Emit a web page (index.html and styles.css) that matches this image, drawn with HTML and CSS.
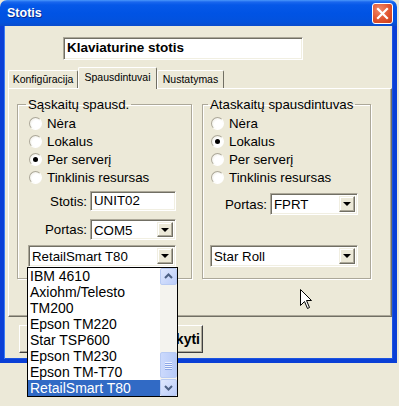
FILE: index.html
```html
<!DOCTYPE html>
<html lang="lt">
<head>
  <meta charset="UTF-8">
  <title>Stotis</title>
  <link rel="stylesheet" href="styles.css">
</head>
<body>

<div class="window">
  <div class="titlebar">
    <span class="title">Stotis</span>
    <span class="close">
      <svg width="21" height="21" viewBox="0 0 21 21">
        <path d="M6 6 L15 15 M15 6 L6 15" stroke="#fff" stroke-width="2.2" stroke-linecap="square"/>
      </svg>
    </span>
  </div>

  <div class="frame">
    <div class="name-field">Klaviaturine stotis</div>

    <div class="tabs">
      <div class="tab tab-konf">Konfigūracija</div>
      <div class="tab tab-spausd active">Spausdintuvai</div>
      <div class="tab tab-nust">Nustatymas</div>
    </div>

    <div class="panel">
      <!-- Sąskaitų spausdintuvas -->
      <fieldset class="group group-left">
        <legend>Sąskaitų spausd.</legend>
        <div class="radios">
          <div class="radio-row"><span class="radio"></span>Nėra</div>
          <div class="radio-row"><span class="radio"></span>Lokalus</div>
          <div class="radio-row"><span class="radio checked"></span>Per serverį</div>
          <div class="radio-row"><span class="radio"></span>Tinklinis resursas</div>
        </div>
        <div class="field-row row-stotis">
          <span class="field-label">Stotis:</span>
          <div class="edit">UNIT02</div>
        </div>
        <div class="field-row row-portas">
          <span class="field-label">Portas:</span>
          <div class="combo combo-port">
            <span class="combo-text">COM5</span>
            <span class="combo-btn"><span class="arrow"></span></span>
          </div>
        </div>
        <div class="combo combo-model">
          <span class="combo-text">RetailSmart T80</span>
          <span class="combo-btn"><span class="arrow"></span></span>
        </div>
      </fieldset>

      <!-- Ataskaitų spausdintuvas -->
      <fieldset class="group group-right">
        <legend>Ataskaitų spausdintuvas</legend>
        <div class="radios">
          <div class="radio-row"><span class="radio"></span>Nėra</div>
          <div class="radio-row"><span class="radio checked"></span>Lokalus</div>
          <div class="radio-row"><span class="radio"></span>Per serverį</div>
          <div class="radio-row"><span class="radio"></span>Tinklinis resursas</div>
        </div>
        <div class="field-row row-portas-r">
          <span class="field-label">Portas:</span>
          <div class="combo combo-port-r">
            <span class="combo-text">FPRT</span>
            <span class="combo-btn"><span class="arrow"></span></span>
          </div>
        </div>
        <div class="combo combo-model-r">
          <span class="combo-text">Star Roll</span>
          <span class="combo-btn"><span class="arrow"></span></span>
        </div>
      </fieldset>
    </div>

    <!-- el primer botón queda tapado por la lista -->
    <div class="buttons">
      <div class="btn btn-ok"></div>
      <div class="btn btn-cancel">Atsisakyti</div>
    </div>
  </div>
</div>

<!-- Atidarytas sąrašas -->
<div class="droplist">
  <div class="items">
    <div class="item">IBM 4610</div>
    <div class="item">Axiohm/Telesto</div>
    <div class="item">TM200</div>
    <div class="item">Epson TM220</div>
    <div class="item">Star TSP600</div>
    <div class="item">Epson TM230</div>
    <div class="item">Epson TM-T70</div>
    <div class="item selected">RetailSmart T80</div>
  </div>
  <div class="scrollbar">
    <div class="sb-btn">
      <svg width="15" height="15" viewBox="0 0 15 15"><path d="M4 9 L7.5 5.5 L11 9" fill="none" stroke="#4d6185" stroke-width="2"/></svg>
    </div>
    <div class="sb-track">
      <div class="sb-thumb"><span></span><span></span><span></span><span></span></div>
    </div>
    <div class="sb-btn">
      <svg width="15" height="15" viewBox="0 0 15 15"><path d="M4 6 L7.5 9.5 L11 6" fill="none" stroke="#4d6185" stroke-width="2"/></svg>
    </div>
  </div>
</div>

<svg class="cursor" width="13" height="21" viewBox="0 0 13 21">
  <path d="M0.5 0.5 L0.5 16.5 L4.5 12.5 L7.5 19.5 L9.5 18.5 L6.5 11.5 L11.5 11.5 Z" fill="#fff" stroke="#000" stroke-width="1"/>
</svg>

</body>
</html>
```

FILE: styles.css
```css
body {
  margin: 0;
  width: 399px;
  height: 406px;
  overflow: hidden;
  position: relative;
  background: #ece9d8;
  font-family: "Liberation Sans", Arial, sans-serif;
  font-size: 13.3px;
  color: #000;
}
.window {
  width: 397px;
  height: 363px;
}
.titlebar {
  height: 26px;
  display: flex;
  justify-content: space-between;
  align-items: flex-start;
  padding: 0 4px 0 7px;
  border-radius: 7px 7px 0 0;
  background: linear-gradient(#4a98fb 0, #1a67ee 2px, #0558e8 5px, #0053e4 14px, #0352dd 22px, #0a4ccd 26px);
}
.title {
  color: #fff;
  font-weight: bold;
  font-size: 12.5px;
  line-height: 14px;
  margin-top: 6px;
  text-shadow: 1px 1px 0 #0b2a8a;
}
.close {
  width: 21px;
  height: 21px;
  margin-top: 3px;
  box-sizing: border-box;
  border: 1px solid #fff;
  border-radius: 3px;
  background: radial-gradient(circle at 35% 30%, #f0896a, #e0542f 55%, #c83b17);
}
.close svg {
  display: block;
  margin: -1px;
}
.frame {
  height: 337px;
  box-sizing: border-box;
  border: 4px solid #0a3fd6;
  border-top: none;
  box-shadow: inset 1px 0 0 #3a7cf5, inset -1px -1px 0 #1c54e0;
  background: #ece9d8;
  padding-top: 11px;
}
.name-field {
  width: 240px;
  height: 23px;
  margin-left: 59px;
  box-sizing: border-box;
  background: #fff;
  border: 1px solid;
  border-color: #aca899 #fff #fff #aca899;
  box-shadow: inset 1px 1px 0 #716f64, inset -1px -1px 0 #f1efe2;
  font-weight: bold;
  font-size: 13.5px;
  line-height: 20px;
  padding-left: 3px;
}
/* Pestañas */
.tabs {
  display: flex;
  align-items: flex-end;
  height: 20px;
  margin: 8px 0 0 4px;
  position: relative;
  z-index: 1;
}
.tab {
  height: 18px;
  box-sizing: border-box;
  border: 1px solid;
  border-color: #fff #716f64 transparent #fff;
  border-bottom: none;
  border-radius: 2px 2px 0 0;
  background: #ece9d8;
  font-size: 10.5px;
  line-height: 16px;
  text-align: center;
}
.tab-konf { width: 70px; }
.tab-spausd { width: 79px; }
.tab-nust { width: 67px; }
.tab.active {
  height: 22px;
  margin-bottom: -1px;
  line-height: 18px;
}
.panel {
  width: 384px;
  height: 229px;
  margin-left: 4px;
  box-sizing: border-box;
  border: 1px solid;
  border-color: #fff #716f64 #716f64 #fff;
  box-shadow: inset -1px -1px 0 #aca899;
  display: flex;
  gap: 10px;
  padding: 8px 0 0 8px;
}
.group {
  margin: 0;
  padding: 0;
  height: 182px;
  box-sizing: border-box;
  border: 1px solid #aca899;
  box-shadow: 1px 1px 0 #fff, inset 1px 1px 0 #fff;
}
.group-left { width: 175px; }
.group-right { width: 169px; }
.group legend {
  padding: 0 2px;
  line-height: 15px;
}
.group-left legend { margin-left: 8px; }
.group-right legend { margin-left: 5px; }
.radios {
  padding-top: 2px;
}
.radio-row {
  height: 18px;
  display: flex;
  align-items: center;
  gap: 5px;
}
.group-left .radio-row { padding-left: 11px; }
.group-right .radio-row { padding-left: 8px; }
.radio {
  width: 13px;
  height: 13px;
  box-sizing: border-box;
  border-radius: 50%;
  border: 1px solid;
  border-color: #aca899 #fff #fff #aca899;
  background: radial-gradient(circle at 60% 60%, #fff 45%, #e6e4d8);
  position: relative;
}
.radio.checked::after {
  content: "";
  position: absolute;
  left: 3px;
  top: 3px;
  width: 5px;
  height: 5px;
  border-radius: 50%;
  background: #000;
}
.field-row {
  display: flex;
  align-items: center;
}
.field-label {
  text-align: right;
  padding-right: 3px;
  box-sizing: border-box;
}
.group-left .field-label { width: 72px; }
.group-right .field-label { width: 67px; }
.row-stotis { margin-top: 5px; }
.row-portas { margin-top: 8px; }
.row-portas-r { margin-top: 7px; }
.edit,
.combo {
  box-sizing: border-box;
  background: #fff;
  border: 1px solid;
  border-color: #aca899 #fff #fff #aca899;
  box-shadow: inset 1px 1px 0 #716f64, inset -1px -1px 0 #f1efe2;
  padding-left: 3px;
}
.edit {
  width: 86px;
  height: 20px;
  line-height: 18px;
}
.combo {
  display: flex;
  justify-content: space-between;
  padding: 2px 2px 2px 3px;
}
.combo-text {
  line-height: 17px;
}
.combo-btn {
  width: 16px;
  box-sizing: border-box;
  background: #ece9d8;
  border: 1px solid;
  border-color: #f1efe2 #716f64 #716f64 #f1efe2;
  box-shadow: inset -1px -1px 0 #aca899, inset 1px 1px 0 #fff;
  display: flex;
  align-items: center;
  justify-content: center;
}
.arrow {
  width: 0;
  height: 0;
  border-left: 4px solid transparent;
  border-right: 4px solid transparent;
  border-top: 4px solid #000;
}
.combo-port { width: 86px; height: 21px; }
.combo-model { width: 148px; height: 22px; margin: 5px 0 0 10px; }
.combo-port-r { width: 88px; height: 22px; }
.combo-model-r { width: 148px; height: 22px; margin: 30px 0 0 7px; }
/* Botones */
.buttons {
  display: flex;
  gap: 6px;
  margin: 8px 0 0 15px;
}
.btn {
  height: 28px;
  box-sizing: border-box;
  border: 1px solid;
  border-color: #fff #404040 #404040 #fff;
  box-shadow: inset -1px -1px 0 #aca899;
  background: #ece9d8;
  font-weight: bold;
  font-size: 14px;
  line-height: 26px;
  text-align: right;
  padding-right: 2px;
}
.btn-ok { width: 93px; }
.btn-cancel { width: 85px; }
/* Lista desplegada */
.droplist {
  position: absolute;
  left: 27px;
  top: 267px;
  width: 151px;
  height: 130px;
  box-sizing: border-box;
  border: 1px solid #000;
  background: #fff;
  display: flex;
}
.items {
  flex: 1;
}
.item {
  height: 16px;
  line-height: 16px;
  padding-left: 2px;
  font-size: 14px;
}
.item.selected {
  background: #316ac5;
  color: #fff;
}
.scrollbar {
  width: 17px;
  display: flex;
  flex-direction: column;
  background: #f4f3ee;
}
.sb-btn {
  height: 17px;
  box-sizing: border-box;
  border: 1px solid #b9cbf3;
  border-radius: 2px;
  background: linear-gradient(135deg, #dfe8fe, #bccdf9);
  display: flex;
  align-items: center;
  justify-content: center;
}
.sb-track {
  flex: 1;
  display: flex;
  flex-direction: column;
  justify-content: flex-end;
  padding-bottom: 1px;
}
.sb-thumb {
  height: 26px;
  box-sizing: border-box;
  border: 1px solid #b9cbf3;
  border-radius: 2px;
  background: linear-gradient(90deg, #cbd9fc, #b8cbf8);
  display: flex;
  flex-direction: column;
  align-items: center;
  justify-content: center;
  gap: 1px;
}
.sb-thumb span {
  width: 7px;
  height: 1px;
  background: #eef3ff;
  box-shadow: 0 1px 0 #8ca6e6;
}
.cursor {
  position: absolute;
  left: 300px;
  top: 289px;
}
```
